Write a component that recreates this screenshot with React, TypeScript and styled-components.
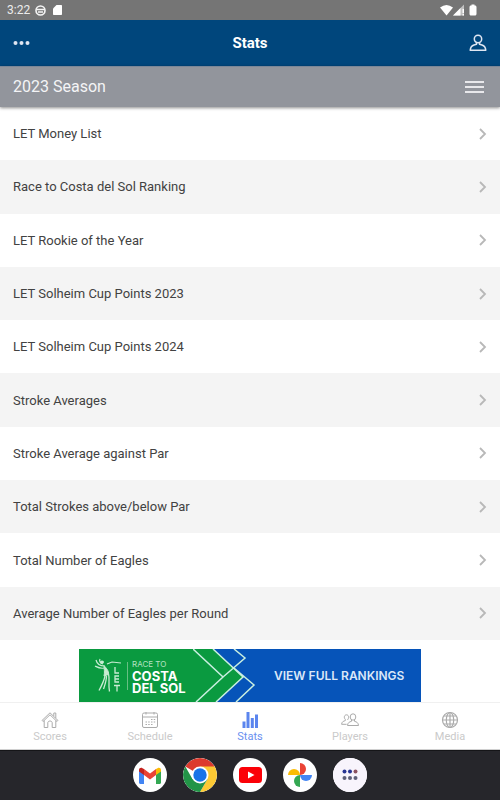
import React from "react";
import styled, { createGlobalStyle } from "styled-components";

const Global = createGlobalStyle`
  *, *::before, *::after { box-sizing: border-box; }
  body { margin: 0; background: #fff; font-family: Roboto, "Liberation Sans", sans-serif; }
  button { font: inherit; border: 0; padding: 0; background: none; cursor: pointer; }
  a { color: inherit; text-decoration: none; }
  svg { display: block; flex: none; }
`;

const Screen = styled.div`
  min-height: 100vh;
  display: flex;
  flex-direction: column;
`;

const StatusBar = styled.div`
  height: 20px;
  padding: 0 22px 0 7px;
  display: flex;
  align-items: center;
  justify-content: space-between;
  background: #757575;
  color: #ececec;
  font-size: 12px;
`;

const StatusGroup = styled.div`
  display: flex;
  align-items: center;
  gap: 5px;
`;

const Header = styled.header`
  height: 46px;
  padding: 0 13px;
  display: grid;
  grid-template-columns: 1fr auto 1fr;
  align-items: center;
  background: #00467c;
  color: #fff;
`;

const Title = styled.h1`
  margin: 0;
  font-size: 15px;
  font-weight: 700;
`;

const IconButton = styled.button<{ $end?: boolean }>`
  color: #dfe6f2;
  justify-self: ${(p) => (p.$end ? "end" : "start")};
`;

const SeasonBar = styled.div`
  position: relative;
  height: 41px;
  padding: 0 16px 0 13px;
  display: flex;
  align-items: center;
  justify-content: space-between;
  background: #92959c;
  box-shadow: inset 0 1px 0 #7b8798, 0 1px 3px rgba(0, 0, 0, 0.45);
`;

const SeasonTitle = styled.h2`
  margin: 0;
  font-size: 16px;
  line-height: 20px;
  font-weight: 400;
  color: #f4f4f6;
`;

const List = styled.ul`
  flex: 1;
  margin: 0;
  padding: 0;
  list-style: none;
  display: grid;
  grid-auto-rows: 1fr;
`;

const Row = styled.li`
  display: flex;
  background: #fff;
  &:nth-child(even) { background: #f4f4f4; }
`;

const RowLink = styled.a`
  flex: 1;
  min-height: 44px;
  padding: 0 12px 0 13px;
  display: flex;
  align-items: center;
  justify-content: space-between;
  font-size: 13px;
  color: #424242;
`;

const AdSlot = styled.div`
  padding-top: 9px;
  display: flex;
  justify-content: center;
`;

const Banner = styled.a`
  width: 342px;
  height: 53px;
  display: grid;
  grid-template-columns: 53px 61px 1fr 147px;
  align-items: center;
  background: #0654b9;
  color: #fff;
  font-family: Inter, "Liberation Sans", sans-serif;
`;

const BannerMark = styled.div`
  height: 100%;
  padding-right: 4px;
  background: #0a9a40;
  display: flex;
  align-items: center;
  justify-content: flex-end;
`;

const BannerCopy = styled.div`
  height: 100%;
  background: #0a9a40;
  display: flex;
  flex-direction: column;
  justify-content: center;
  font-size: 13px;
  line-height: 12px;
  font-weight: 700;
  white-space: nowrap;
`;

const BannerKicker = styled.span`
  font-size: 8px;
  line-height: 12px;
  font-weight: 400;
  color: #b5e2c2;
`;

const BannerAction = styled.span`
  font-size: 12px;
  font-weight: 600;
  color: #dbe8f8;
  white-space: nowrap;
`;

const TabBar = styled.nav`
  height: 48px;
  display: grid;
  grid-template-columns: repeat(5, 1fr);
  border-top: 1px solid #f0f0f0;
  border-bottom: 1px solid #d0d0d0;
`;

const Tab = styled.a<{ $active?: boolean }>`
  padding-top: 8px;
  display: flex;
  flex-direction: column;
  align-items: center;
  gap: 1px;
  font-size: 11px;
  line-height: 14px;
  color: ${(p) => (p.$active ? "#6a90f0" : "#cacaca")};
  svg { color: ${(p) => (p.$active ? "#5b85ee" : "#ababab")}; }
`;

const Dock = styled.div`
  height: 50px;
  display: flex;
  align-items: center;
  justify-content: center;
  gap: 16px;
  background: #26262b;
  box-shadow: inset 0 1px 0 #151518;
`;

const AppButton = styled.button`
  width: 34px;
  height: 34px;
  border-radius: 50%;
  background: #fff;
  display: grid;
  place-items: center;
  overflow: hidden;
`;

const stats = [
  "LET Money List",
  "Race to Costa del Sol Ranking",
  "LET Rookie of the Year",
  "LET Solheim Cup Points 2023",
  "LET Solheim Cup Points 2024",
  "Stroke Averages",
  "Stroke Average against Par",
  "Total Strokes above/below Par",
  "Total Number of Eagles",
  "Average Number of Eagles per Round",
];

const Chevron = () => (
  <svg width="10" height="14" viewBox="0 0 10 14" fill="none" stroke="#b8b8b8" strokeWidth="1.8" aria-hidden="true">
    <path d="M2 2 7 7 2 12" />
  </svg>
);

const line = { fill: "none", stroke: "currentColor", strokeWidth: 1, "aria-hidden": true } as const;

const HomeIcon = () => (
  <svg width="18" height="18" viewBox="0 0 18 18" {...line}>
    <path d="M1 9.5 9 1.8l8 7.7-1 1-7-6.700-7 6.700zM3.200 9.500v7h3.600v-4.700c0-1 .9-1.800 2.200-1.800s2.200.8 2.200 1.800v4.700h3.600v-7M12.800 5V2h2v5" />
  </svg>
);
const CalendarIcon = () => (
  <svg width="18" height="18" viewBox="0 0 18 18" {...line}>
    <rect x="1.5" y="2" width="15" height="14.5" rx="1.5" />
    <path d="M1.5 6h15M5 1v2.500M13 1v2.500" />
    <path d="M4.500 13.500h1.500M7.200 13.500h1.500M4.500 11h1.500M7.200 11h1.500M10 8.500h1.500M12.700 8.500h1.500M10 11h1.500M12.700 11h1.500M10 13.500h1.500" strokeWidth="1.200" />
  </svg>
);
const BarsIcon = () => (
  <svg width="18" height="18" viewBox="0 0 18 18" fill="currentColor" aria-hidden="true">
    <path d="M1.500 10.500h3V17h-3zM5.500 1h3v16h-3zM9.800 7h3v10h-3zM14 3.500h3V17h-3z" />
  </svg>
);
const PlayersIcon = () => (
  <svg width="18" height="18" viewBox="0 0 18 18" {...line}>
    <ellipse cx="12" cy="6" rx="2.800" ry="3.200" />
    <path d="M10.500 8.800v1.500c-2.200.6-3.800 1.400-4 4.200h11c-.2-2.800-1.800-3.600-4-4.200V8.800" />
    <path d="M6.800 9V8.200C7.400 7.700 7.700 7 7.700 6.200 7.700 4.800 6.700 3.800 5.500 3.800S3.300 4.800 3.300 6.200c0 .9.400 1.600 1 2.100v1.300C2.300 10.200.8 10.800.6 13.300h5" />
  </svg>
);
const GlobeIcon = () => (
  <svg width="18" height="18" viewBox="0 0 18 18" {...line} strokeWidth="1.200">
    <circle cx="9" cy="9" r="7.500" />
    <ellipse cx="9" cy="9" rx="3.700" ry="7.500" />
    <path d="M9 1.500v15M1.500 9h15M2.700 5h12.600M2.700 13h12.600" />
  </svg>
);

const tabs = [
  { label: "Scores", Icon: HomeIcon },
  { label: "Schedule", Icon: CalendarIcon },
  { label: "Stats", Icon: BarsIcon, active: true },
  { label: "Players", Icon: PlayersIcon },
  { label: "Media", Icon: GlobeIcon },
];

const Golfer = () => (
  <svg width="34" height="38" viewBox="0 0 34 38" fill="none" stroke="#c8ecd2" aria-hidden="true">
    <path d="M10.500 9C6 9 3 7 2 3M10 11C6 12 3 10 1 9M9 7C6 6 5 4 6 2M13 7l5-2 9 1" strokeWidth="1.200" />
    <ellipse cx="8" cy="5" rx="2" ry="1.500" fill="#c8ecd2" stroke="none" />
    <path d="M10 8.500c2 2.500 5 5 4.500 9L10 19c1-4 0-7 0-10.500z" fill="#c8ecd2" strokeWidth="1" />
    <path d="M11 19c-1 5-3 9-6 14.500M14.500 17c1.500 5-.5 10 1 17.500M12.500 19c0 5-2 10-3 13" strokeWidth="1.300" />
    <path d="M21 10v6h4M25 19h-4v6h4M21 22h4M20 28.500h6M23 28.500v6" strokeWidth="1.300" />
    <path d="M33.500 5v28" stroke="#68bf83" />
  </svg>
);

const BannerArrows = () => (
  <svg width="100%" height="53" viewBox="0 0 81 53" preserveAspectRatio="none" fill="none" aria-hidden="true">
    <path d="M0 0h20l30 28-27 25H0z" fill="#0a9a40" />
    <path d="M0 0 30 28 3 53M20 0l30 28-27 25M41 0l11 9-22 19M41 19l20 17-18 17" stroke="#c9efe0" strokeWidth="1.500" />
  </svg>
);

const GmailIcon = () => (
  <svg width="22" height="17" viewBox="0 0 22 17" aria-hidden="true">
    <path d="M0 3v12.500c0 .8.600 1.500 1.500 1.500H5V7z" fill="#4285f4" />
    <path d="M22 3v12.500c0 .8-.6 1.500-1.500 1.500H17V7z" fill="#34a853" />
    <path d="M17 2v6l5-3.500V3c0-2-2-2.700-3.500-1.800z" fill="#fbbc04" />
    <path d="M5 8V2l6 4.500L17 2v6l-6 4.500z" fill="#ea4335" />
    <path d="M0 3v1.500L5 8V2L3.500 1.200C2 .3 0 1 0 3z" fill="#c5221f" />
  </svg>
);
const ChromeIcon = () => (
  <svg width="34" height="34" viewBox="0 0 34 34" aria-hidden="true">
    <path d="M17 17 2.300 8.500a17 17 0 0 1 29.400 0z" fill="#dc3a2e" />
    <path d="M17 8.500h14.700A17 17 0 0 1 17 34l7.400-12.700z" fill="#fcc934" />
    <path d="M2.300 8.500A17 17 0 0 0 17 34l7.400-12.700L17 17l-7.400 4.300z" fill="#229447" />
    <circle cx="17" cy="17" r="8.500" fill="#fff" />
    <circle cx="17" cy="17" r="6.700" fill="#1a73e8" />
  </svg>
);
const YouTubeIcon = () => (
  <svg width="23" height="16" viewBox="0 0 23 16" aria-hidden="true">
    <rect width="23" height="16" rx="3.500" fill="#fb0007" />
    <path d="m9 4.500 6.500 3.500L9 11.500z" fill="#fff" />
  </svg>
);
const PhotosIcon = () => (
  <svg width="24" height="24" viewBox="0 0 24 24" aria-hidden="true">
    <path d="M12 0a6 6 0 0 1 0 12z" fill="#ea4335" />
    <path d="M24 12a6 6 0 0 1-12 0z" fill="#4285f4" />
    <path d="M12 24a6 6 0 0 1 0-12z" fill="#34a853" />
    <path d="M0 12a6 6 0 0 1 12 0z" fill="#fbbc04" />
  </svg>
);
const AppsIcon = () => (
  <svg width="34" height="34" viewBox="0 0 34 34" aria-hidden="true">
    <rect width="34" height="34" fill="#f8f4fc" />
    <g fill="#283593"><circle cx="11.500" cy="13.500" r="2" /><circle cx="17" cy="13.500" r="2" /></g>
    <circle cx="22.500" cy="13.500" r="2" fill="#8b5260" />
    <g fill="#5f6078"><circle cx="11.500" cy="20" r="2" /><circle cx="17" cy="20" r="2" /><circle cx="22.500" cy="20" r="2" /></g>
  </svg>
);

const dock = [
  { label: "Gmail", Icon: GmailIcon },
  { label: "Chrome", Icon: ChromeIcon },
  { label: "YouTube", Icon: YouTubeIcon },
  { label: "Photos", Icon: PhotosIcon },
  { label: "All apps", Icon: AppsIcon },
];

export default function App() {
  return (
    <Screen>
      <Global />
      <StatusBar>
        <StatusGroup>
          <span>3:22</span>
          <svg width="11" height="11" viewBox="0 0 11 11" fill="none" stroke="#f5f5f5" aria-hidden="true">
            <circle cx="5.500" cy="5.500" r="4.500" strokeWidth="1.600" />
            <path d="M1.500 4.500h8M3 7h5" strokeWidth="1.500" />
          </svg>
          <svg width="13" height="12" viewBox="0 0 13 12" aria-hidden="true">
            <path d="M5.500 1H10c.6 0 1 .4 1 1v8c0 .6-.4 1-1 1H3c-.6 0-1-.4-1-1V4.500z" fill="#fff" />
          </svg>
        </StatusGroup>
        <svg width="38" height="12" viewBox="0 0 38 12" fill="#fff" aria-hidden="true">
          <path d="M0 3.500Q6.500-1.500 13 3.500L6.500 11.500z" />
          <path d="M13 11.500 24 .5v11z" opacity=".55" />
          <path d="M13 11.500 20.500 4v7.500zM22.500 5H24v4h-1.500zM22.500 10H24v1.500h-1.500z" />
          <path d="M31.500 1.500V.5h3v1H35c.8 0 1.500.7 1.500 1.500v7c0 .8-.7 1.500-1.500 1.500h-4c-.8 0-1.500-.7-1.500-1.500V3c0-.8.700-1.500 1.500-1.500z" />
        </svg>
      </StatusBar>
      <Header>
        <IconButton aria-label="More">
          <svg width="17" height="6" viewBox="0 0 17 6" fill="currentColor" aria-hidden="true">
            <circle cx="2.500" cy="3" r="2" /><circle cx="8.500" cy="3" r="2" /><circle cx="14.500" cy="3" r="2" />
          </svg>
        </IconButton>
        <Title>Stats</Title>
        <IconButton $end aria-label="Profile">
          <svg width="18" height="18" viewBox="0 0 18 18" fill="none" stroke="currentColor" strokeWidth="1.500" strokeLinejoin="round" aria-hidden="true">
            <circle cx="9" cy="5" r="3.700" />
            <path d="M7.500 8.500v1.800L5 11c-2.200.7-3.500 2-3.800 5.200h15.600C16.500 13 15.200 11.700 13 11l-2.500-.7V8.500" />
          </svg>
        </IconButton>
      </Header>
      <SeasonBar>
        <SeasonTitle>2023 Season</SeasonTitle>
        <IconButton $end aria-label="Select season">
          <svg width="19" height="14" viewBox="0 0 19 14" fill="#e8e8eb" aria-hidden="true">
            <path d="M0 1h19v2H0zM0 6h19v2H0zM0 11h19v2H0z" />
          </svg>
        </IconButton>
      </SeasonBar>
      <List>
        {stats.map((name) => (
          <Row key={name}>
            <RowLink href="#">{name}<Chevron /></RowLink>
          </Row>
        ))}
      </List>
      <AdSlot>
        <Banner href="#">
          <BannerMark><Golfer /></BannerMark>
          <BannerCopy>
            <BannerKicker>RACE TO</BannerKicker>
            <span>COSTA<br />DEL SOL</span>
          </BannerCopy>
          <BannerArrows />
          <BannerAction>VIEW FULL RANKINGS</BannerAction>
        </Banner>
      </AdSlot>
      <TabBar>
        {tabs.map(({ label, Icon, active }) => (
          <Tab key={label} href="#" $active={active} aria-current={active ? "page" : undefined}>
            <Icon />{label}
          </Tab>
        ))}
      </TabBar>
      <Dock>
        {dock.map(({ label, Icon }) => (
          <AppButton key={label} aria-label={label}><Icon /></AppButton>
        ))}
      </Dock>
    </Screen>
  );
}
